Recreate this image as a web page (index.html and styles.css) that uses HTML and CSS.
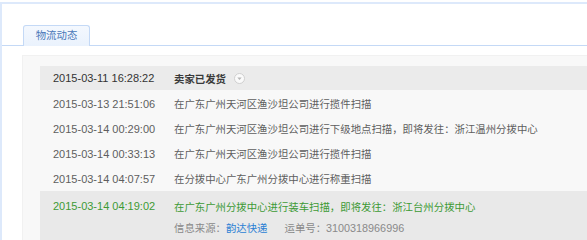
FILE: index.html
```html
<!DOCTYPE html>
<html lang="zh">
<head>
<meta charset="utf-8">
<link rel="stylesheet" href="styles.css">
</head>
<body>
<div class="panel">
  <div class="tabs">
    <div class="tab">物流动态</div>
  </div>
  <div class="content">
    <div class="row first">
      <span class="date">2015-03-11 16:28:22</span>
      <span class="desc strong">卖家已发货</span>
      <span class="toggle"><svg width="11" height="11" viewBox="0 0 11 11"><circle cx="5.5" cy="5.5" r="5" fill="#fafafa" stroke="#cfcfcf"/><path d="M3.3 4.5 L7.7 4.5 L5.5 6.9 Z" fill="#b5b5b5"/></svg></span>
    </div>
    <div class="row">
      <span class="date">2015-03-13 21:51:06</span>
      <span class="desc">在广东广州天河区渔沙坦公司进行揽件扫描</span>
    </div>
    <div class="row">
      <span class="date">2015-03-14 00:29:00</span>
      <span class="desc">在广东广州天河区渔沙坦公司进行下级地点扫描，即将发往：浙江温州分拨中心</span>
    </div>
    <div class="row">
      <span class="date">2015-03-14 00:33:13</span>
      <span class="desc">在广东广州天河区渔沙坦公司进行揽件扫描</span>
    </div>
    <div class="row">
      <span class="date">2015-03-14 04:07:57</span>
      <span class="desc">在分拨中心广东广州分拨中心进行称重扫描</span>
    </div>
    <div class="row last">
      <div class="line">
        <span class="date">2015-03-14 04:19:02</span>
        <span class="desc">在广东广州分拨中心进行装车扫描，即将发往：浙江台州分拨中心</span>
      </div>
      <div class="meta">
        <span class="src">信息来源：<span class="link">韵达快递</span></span>
        <span class="waybill">运单号：<span class="num">3100318966996</span></span>
      </div>
    </div>
  </div>
</div>
</body>
</html>
```
FILE: styles.css
```css
html, body {
  margin: 0;
  padding: 0;
  background: #ffffff;
}
body {
  font-family: "Liberation Sans", "Noto Sans CJK SC", sans-serif;
  font-size: 10.4px;
  color: #5e5e5e;
  overflow: hidden;
  height: 240px;
}
.panel {
  margin-top: 2px;
  border-top: 2px solid #dde9fb;
  border-left: 2px solid #dde9fb;
  height: 236px;
  display: flex;
  flex-direction: column;
  overflow: hidden;
}
.tabs {
  padding: 21px 0 0 21px;
  border-bottom: 1px solid #c4d9f6;
  display: flex;
  flex: none;
}
.tab {
  width: 65px;
  height: 20px;
  line-height: 20px;
  text-align: center;
  color: #4a78b8;
  border: 1px solid #c4d9f6;
  border-bottom: none;
  border-radius: 3px 3px 0 0;
  background: linear-gradient(#f4f8fe, #eaf2fd);
  margin-bottom: -1px;
  position: relative;
}
.content {
  flex: 1;
  margin: 9px 0 0 20px;
  background: #f8f8f8;
  border-top: 1px solid #f1f1f1;
  border-left: 1px solid #f1f1f1;
  padding: 10px 0 0 17px;
  display: flex;
  flex-direction: column;
}
.row {
  display: flex;
  align-items: center;
  height: 25px;
  padding-left: 13px;
  flex: none;
}
.row.first {
  background: #ebebeb;
  color: #333;
  height: 24px;
  margin-bottom: 1px;
}
.date {
  width: 121px;
  flex: none;
  white-space: nowrap;
  font-size: 11px;
}
.desc {
  white-space: nowrap;
}
.strong {
  font-weight: bold;
  color: #3a3a3a;
}
.toggle {
  display: flex;
  margin-left: 8px;
}
.row.last {
  display: block;
  height: auto;
  flex: 1;
  background: #e9e9e9;
  padding-top: 3px;
}
.row.last .line {
  display: flex;
  align-items: center;
  height: 24px;
  color: #3d9a35;
}
.meta {
  display: flex;
  align-items: center;
  height: 18px;
  padding-left: 121px;
  color: #8a8a8a;
}
.link {
  color: #2a7fd4;
}
.waybill {
  margin-left: 17px;
}
.num {
  font-size: 10.8px;
}
```
